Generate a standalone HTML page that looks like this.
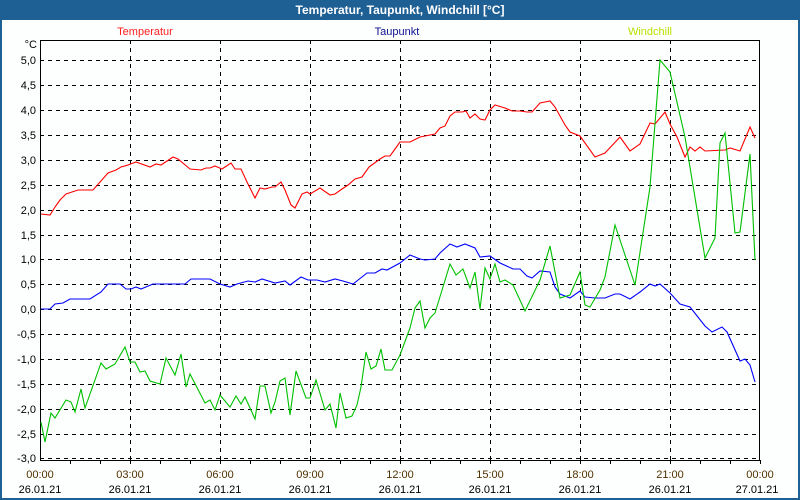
<!DOCTYPE html>
<html><head><style>
body{margin:0;width:800px;height:500px;overflow:hidden;background:#1e5f94;font-family:"Liberation Sans",sans-serif}
</style></head><body>
<svg width="800" height="500" viewBox="0 0 800 500" style="display:block" font-family="Liberation Sans, sans-serif">
<rect x="0" y="0" width="800" height="500" fill="#1e5f94"/>
<rect x="2" y="20" width="796" height="478" fill="#fcfffd"/>
<text x="400" y="14" fill="#fff" font-size="12" font-weight="bold" text-anchor="middle">Temperatur, Taupunkt, Windchill [°C]</text>
<text x="145" y="35" fill="#ff2020" font-size="11" text-anchor="middle">Temperatur</text>
<text x="397" y="35" fill="#101090" font-size="11" text-anchor="middle">Taupunkt</text>
<text x="650" y="35" fill="#b8e000" font-size="11" text-anchor="middle">Windchill</text>
<g stroke="#000" stroke-width="1" stroke-dasharray="4,4" fill="none">
<path d="M40 60.5H760M40 85.5H760M40 110.5H760M40 135.5H760M40 160.5H760M40 185.5H760M40 210.5H760M40 235.5H760M40 259.5H760M40 284.5H760M40 309.5H760M40 334.5H760M40 359.5H760M40 384.5H760M40 409.5H760M40 434.5H760M40 458.5H760"/>
<path d="M130.5 40V460M220.5 40V460M310.5 40V460M400.5 40V460M490.5 40V460M580.5 40V460M670.5 40V460"/>
</g>
<rect x="40.5" y="40.5" width="719" height="420" fill="none" stroke="#000"/>
<path d="M70.5 460v4M100.5 460v4M130.5 460v4M160.5 460v4M190.5 460v4M220.5 460v4M250.5 460v4M280.5 460v4M310.5 460v4M340.5 460v4M370.5 460v4M400.5 460v4M430.5 460v4M460.5 460v4M490.5 460v4M520.5 460v4M550.5 460v4M580.5 460v4M610.5 460v4M640.5 460v4M670.5 460v4M700.5 460v4M730.5 460v4M760.5 460v4" stroke="#000"/>
<g font-size="11" fill="#000" text-anchor="end">
<text x="37" y="48">°C</text>
<text x="36" y="64">5,0</text><text x="36" y="89">4,5</text><text x="36" y="114">4,0</text><text x="36" y="139">3,5</text><text x="36" y="164">3,0</text><text x="36" y="189">2,5</text><text x="36" y="214">2,0</text><text x="36" y="239">1,5</text><text x="36" y="263">1,0</text><text x="36" y="288">0,5</text><text x="36" y="313">0,0</text><text x="36" y="338">-0,5</text><text x="36" y="363">-1,0</text><text x="36" y="388">-1,5</text><text x="36" y="413">-2,0</text><text x="36" y="438">-2,5</text><text x="36" y="462">-3,0</text>
</g>
<g font-size="11" text-anchor="middle">
<g fill="#503000">
<text x="40" y="478">00:00</text><text x="130" y="478">03:00</text><text x="220" y="478">06:00</text><text x="310" y="478">09:00</text><text x="400" y="478">12:00</text><text x="490" y="478">15:00</text><text x="580" y="478">18:00</text><text x="670" y="478">21:00</text><text x="760" y="478">00:00</text>
</g>
<g fill="#000">
<text x="40" y="493">26.01.21</text><text x="130" y="493">26.01.21</text><text x="220" y="493">26.01.21</text><text x="310" y="493">26.01.21</text><text x="400" y="493">26.01.21</text><text x="490" y="493">26.01.21</text><text x="580" y="493">26.01.21</text><text x="670" y="493">26.01.21</text><text x="757" y="493">27.01.21</text>
</g></g>
<g fill="none" stroke-width="1.1">
<polyline stroke="#ff0000" points="41,214 50,215 55,207 60,200 66,194 78,190 93,190 108,173 116,170 121,167 128,165 136,162 150,167 156,164 161,165 173,157 178,159 190,169 201,170 206,168 210,168 215,166 222,169 231,163 235,169 241,169 247,182 255,198 260,188 265,189 272,187 275,187 281,182 285,190 291,205 295,208 302,194 307,192 310,194 320,188 330,195 335,194 342,189 348,185 355,179 362,177 369,167 380,159 385,156 390,156 395,149 400,142 410,142 420,137 435,134 440,128 445,126 450,116 455,112 462,112 466,111 470,118 475,114 480,119 485,120 490,110 495,105 505,108 512,111 520,111 527,112 532,112 540,103 550,101 555,107 565,125 570,132 580,136 595,157 605,153 620,137 630,151 640,144 650,123 655,124 665,112 670,124 677,137 685,157 690,147 695,151 700,147 705,151 725,150 730,148 740,151 750,127 755,138"/>
<polyline stroke="#0000ff" points="41,309 50,309 55,304 63,303 70,299 90,299 101,292 108,284 120,284 126,289 131,289 136,287 141,289 153,284 185,284 191,279 210,279 220,284 230,287 237,284 248,281 255,282 262,279 275,283 285,281 290,285 301,277 308,280 317,280 325,282 335,279 343,281 353,284 367,273 375,273 382,269 387,270 400,263 410,255 420,259 425,260 435,259 440,253 450,244 457,247 465,244 475,248 480,257 490,256 500,263 513,269 520,269 527,276 532,278 540,271 550,272 555,287 560,294 570,298 580,291 585,297 595,298 605,298 615,294 620,294 630,299 640,292 650,284 655,286 660,284 670,293 680,304 690,307 705,326 712,332 722,327 727,332 740,361 745,359 750,365 755,382"/>
<polyline stroke="#00c000" points="41,422 45,442 51,413 55,418 66,400 71,402 75,412 81,389 85,408 101,363 106,369 115,364 125,347 130,362 135,362 140,372 145,371 150,381 160,384 166,358 175,375 181,354 186,387 190,374 205,403 210,400 215,410 220,395 230,407 236,396 241,404 245,397 255,419 260,386 265,386 271,413 275,402 280,381 285,378 290,415 296,371 306,398 310,398 316,380 325,410 330,404 336,428 340,393 346,418 352,416 357,405 361,387 366,352 371,369 376,366 381,349 385,370 392,370 400,355 410,328 415,308 420,301 425,328 430,318 435,313 450,264 456,275 463,269 470,288 475,272 480,309 485,268 490,279 495,264 500,282 505,280 513,285 525,311 540,280 550,246 560,298 570,295 580,272 585,305 590,307 600,290 605,277 615,225 635,285 650,187 660,60 670,72 685,137 705,258 715,238 720,143 725,133 735,233 740,232 750,154 755,260"/>
</g>
</svg>
</body></html>
